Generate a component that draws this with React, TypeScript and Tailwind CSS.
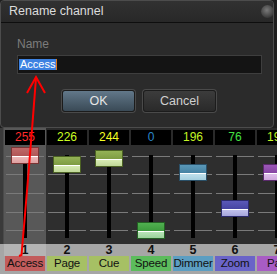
import React from "react";

type Ch = {
  n: number;
  name: string;
  v: number;
  valColor: string;
  label: string;
  knobTop: string;
  knobTop2: string;
  knobBot: string;
  knobBot2: string;
  knobBorder: string;
};

const chans: Ch[] = [
  { n: 1, name: "Access", v: 255, valColor: "#ff2a2a", label: "#c25c5c", knobTop: "#c06a6a", knobTop2: "#b05656", knobBot: "#ecb8b8", knobBot2: "#dea0a0", knobBorder: "#7a3434" },
  { n: 2, name: "Page", v: 226, valColor: "#ccff22", label: "#a6c064", knobTop: "#94b256", knobTop2: "#7e9c42", knobBot: "#d8ecb4", knobBot2: "#c0d898", knobBorder: "#4c6224" },
  { n: 3, name: "Cue", v: 244, valColor: "#f4ff22", label: "#a6c064", knobTop: "#94b256", knobTop2: "#7e9c42", knobBot: "#d8ecb4", knobBot2: "#c0d898", knobBorder: "#4c6224" },
  { n: 4, name: "Speed", v: 0, valColor: "#2a86c8", label: "#5cbc5c", knobTop: "#50b050", knobTop2: "#3c9a3c", knobBot: "#b8e4b8", knobBot2: "#9ad29a", knobBorder: "#246024" },
  { n: 5, name: "Dimmer", v: 196, valColor: "#c4f424", label: "#5c9ec2", knobTop: "#5a98b8", knobTop2: "#4682a2", knobBot: "#c0e0ec", knobBot2: "#a4cede", knobBorder: "#2a5068" },
  { n: 6, name: "Zoom", v: 76, valColor: "#44e044", label: "#6a64c8", knobTop: "#5a58b8", knobTop2: "#4644a2", knobBot: "#c0c0ec", knobBot2: "#a6a6dc", knobBorder: "#2c2a6c" },
  { n: 7, name: "Pan", v: 196, valColor: "#c4f424", label: "#a85cc4", knobTop: "#9c58b8", knobTop2: "#8644a2", knobBot: "#e0c0ec", knobBot2: "#cea6dc", knobBorder: "#5a2a6c" },
];

const gridYs = [11, 29, 48, 67, 85];

function Column({ c, active }: { c: Ch; active: boolean }) {
  const top = 2 + (75 * (255 - c.v)) / 255;
  return (
    <div className="w-[42px] shrink-0 flex flex-col">
      <div className={`${active ? "bg-[#585858]" : "bg-[#2a2a2a]"} flex flex-col`}>
        <div className="px-[1px] pt-[2px]">
          <div
            className="h-[15px] bg-black text-center text-[12px] leading-[15px]"
            style={{ color: c.valColor }}
          >
            {c.v}
          </div>
        </div>
        <div className={`relative h-[99px] ${active ? "bg-[#585858]" : "bg-[#2e2e2e]"}`}>
          {gridYs.map((y) => (
            <div
              key={y}
              className="absolute left-[2px] right-[2px] h-[1px] bg-[#7a7a7a]"
              style={{ top: y }}
            />
          ))}
          <div className="absolute left-[19px] w-[4px] top-[10px] h-[83px] bg-black" />
          <div
            className="absolute left-[7px] w-[28px] h-[17px] border flex flex-col overflow-hidden"
            style={{ top, borderColor: c.knobBorder }}
          >
            <div
              className="h-[8px]"
              style={{ background: `linear-gradient(${c.knobTop}, ${c.knobTop2})` }}
            />
            <div className="h-[1px] bg-white" />
            <div
              className="flex-1"
              style={{ background: `linear-gradient(${c.knobBot}, ${c.knobBot2})` }}
            />
          </div>
        </div>
      </div>
      <div
        className={`h-[12px] ${active ? "bg-[#b4b4b4]" : "bg-[#a6a6a6]"} text-center text-[12.5px] font-bold leading-[12px] text-[#111]`}
      >
        {c.n}
      </div>
      <div className="px-[1px]">
        <div
          className="h-[15px] flex justify-center text-[11.5px] tracking-[-0.2px] leading-[15px] text-[#111] whitespace-nowrap"
          style={{ background: c.label }}
        >
          {c.name}
        </div>
      </div>
    </div>
  );
}

export default function App() {
  return (
    <div
      className="relative w-[277px] h-[274px] overflow-hidden bg-[#1e1e1e]"
      style={{ fontFamily: '"Liberation Sans", Arial, sans-serif' }}
    >
      {/* Dialog */}
      <div className="w-[274px] h-[128px] rounded-[4px] border border-[#4c4c4c] bg-[#2b2b2b] flex flex-col overflow-hidden">
        <div className="relative h-[22px] shrink-0 border-b border-[#0e0e0e] bg-gradient-to-b from-[#313131] to-[#282828] flex items-center pl-[8px]">
          <span className="text-[12.5px] text-[#dcdcdc] leading-none">Rename channel</span>
          <div
            className="absolute left-[260px] top-[4px] w-[13px] h-[13px] rounded-full"
            style={{ background: "radial-gradient(circle at 45% 40%, #7a7a7a, #3a3a3a 70%, #2a2a2a)" }}
          />
        </div>
        <div className="flex flex-col pl-[16px] pt-[13px]">
          <div className="h-[16px] text-[12px] leading-[16px] text-[#7c7c7c]">Name</div>
          <div className="mt-[3px] w-[245px] h-[19px] bg-[#141414] border border-[#3e3e3e] flex items-center pl-[1px]">
            <span className="bg-[#3d82e2] text-white text-[11px] leading-[11px] h-[11px] px-[1px]">Access</span>
            <span className="w-[1px] h-[11px] bg-[#e07a1a]" />
          </div>
          <div className="mt-[16px] pl-[45px] flex gap-[8px]">
            <div className="w-[73px] h-[22px] rounded-[3px] border border-[#1c1c1c] bg-gradient-to-b from-[#62788a] to-[#3a4a56] flex items-center justify-center text-[12.5px] text-[#e6e6e6] shadow-[0_0_0_1px_#4a4a4a]">
              OK
            </div>
            <div className="w-[73px] h-[22px] rounded-[3px] border border-[#1c1c1c] bg-gradient-to-b from-[#3c3c3c] to-[#2a2a2a] flex items-center justify-center text-[12.5px] text-[#d0d0d0] shadow-[0_0_0_1px_#4a4a4a]">
              Cancel
            </div>
          </div>
        </div>
      </div>

      {/* Fader panel */}
      <div className="flex h-[146px] bg-[#a6a6a6]">
        <div className="w-[4px] shrink-0 flex flex-col">
          <div className="h-[116px] bg-[#3a3a3a] border-r border-[#4a4a4a]" />
          <div className="flex-1 bg-[#a6a6a6]" />
        </div>
        {chans.map((c, i) => (
          <Column key={c.n} c={c} active={i === 0} />
        ))}
      </div>

      {/* Red annotation arrow */}
      <svg
        className="absolute left-0 top-0 pointer-events-none"
        width={277}
        height={274}
        viewBox="0 0 277 274"
      >
        <path
          d="M36 78 Q29 170 21.5 255 L19 256"
          fill="none"
          stroke="#ff0000"
          strokeWidth={2}
        />
        <path d="M27 93 L36 77 L45 93" fill="none" stroke="#ff0000" strokeWidth={2} />
      </svg>
    </div>
  );
}
